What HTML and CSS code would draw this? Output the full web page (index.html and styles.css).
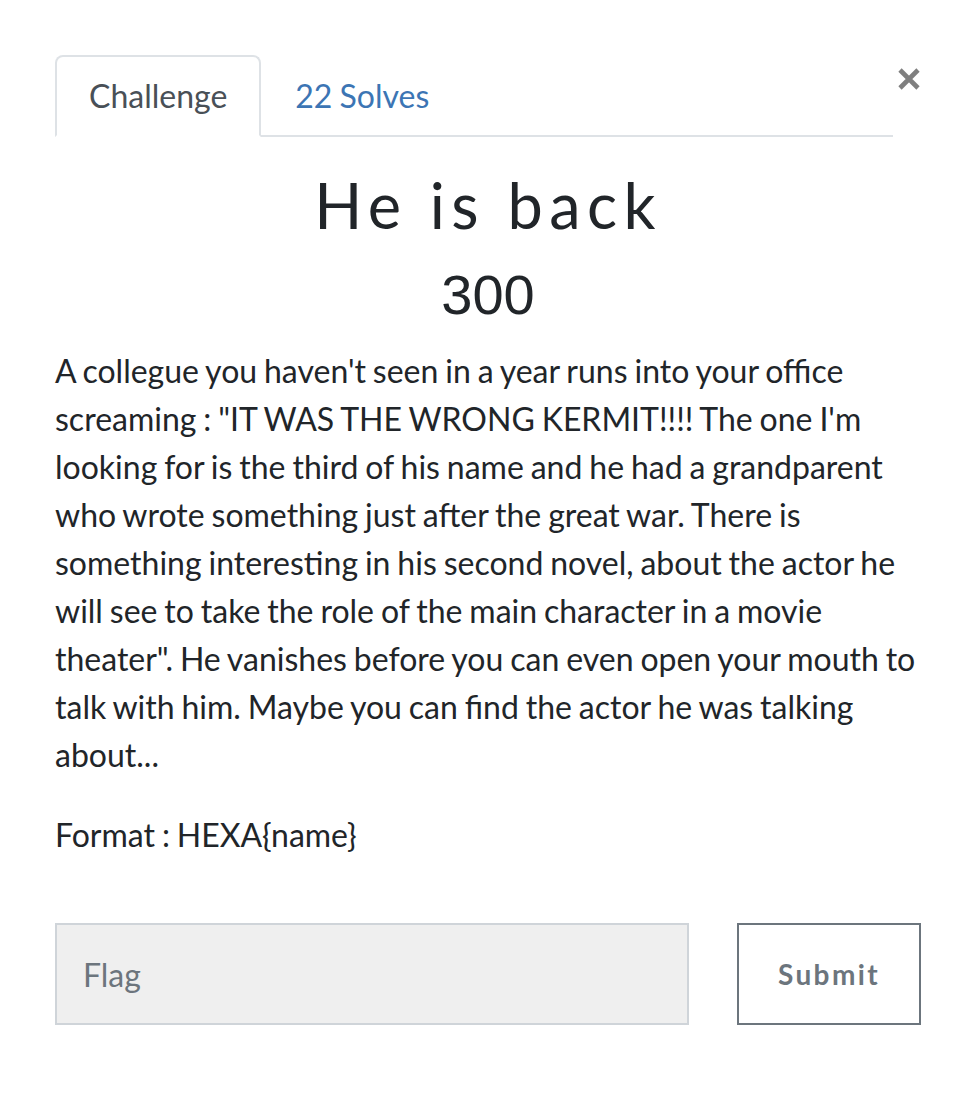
FILE: index.html
```html
<!DOCTYPE html>
<html lang="en">
<head>
<meta charset="utf-8">
<title>He is back</title>
<link rel="stylesheet" href="styles.css">
</head>
<body>
<div class="modal-body">
  <div class="top-row">
    <ul class="nav-tabs">
      <li class="tab active">Challenge</li>
      <li class="tab link">22 Solves</li>
    </ul>
    <button class="close" type="button" aria-label="Close">
      <svg width="24" height="24" viewBox="0 0 24 24"><path d="M3 3 L21 21 M21 3 L3 21" stroke="#7f7f7f" stroke-width="4.6" stroke-linecap="butt"/></svg>
    </button>
  </div>
  <h2 class="challenge-name">He is back</h2>
  <h3 class="challenge-value">300</h3>
  <p class="desc">A collegue you haven't seen in a year runs into your office screaming : "IT WAS THE WRONG KERMIT!!!! The one I'm looking for is the third of his name and he had a grandparent who wrote something just after the great war. There is something interesting in his second novel, about the actor he will see to take the role of the main character in a movie theater". He vanishes before you can even open your mouth to talk with him. Maybe you can find the actor he was talking about...</p>
  <p class="desc">Format : HEXA{name}</p>
  <form class="submit-row">
    <input class="flag-input" type="text" placeholder="Flag">
    <button class="submit-btn" type="button">Submit</button>
  </form>
</div>
</body>
</html>
```
FILE: styles.css
```css
html, body {
  margin: 0;
  padding: 0;
  background: #ffffff;
}
body {
  font-family: Lato, "Liberation Sans", sans-serif;
  color: #212529;
}
.modal-body {
  width: 866px;
  padding: 55px 0 0 55px;
}
.top-row {
  display: flex;
  align-items: flex-start;
}
.nav-tabs {
  flex: 1;
  display: flex;
  list-style: none;
  margin: 0;
  padding: 0;
  border-bottom: 2px solid #dee2e6;
  height: 80px;
}
.tab {
  font-size: 32px;
  line-height: 48px;
  padding: 15px 32px 15px;
  margin-bottom: -2px;
  border: 2px solid transparent;
  border-top-left-radius: 8px;
  border-top-right-radius: 8px;
  word-spacing: -1px;
}
.tab.active {
  color: #495057;
  background: #fff;
  border-color: #dee2e6 #dee2e6 #fff;
}
.tab.link {
  color: #3c75b4;
}
.close {
  width: 28px;
  height: 48px;
  padding: 0;
  margin: 0;
  border: 0;
  background: transparent;
  display: flex;
  justify-content: flex-end;
  align-items: flex-start;
  padding-top: 12px;
}
.challenge-name {
  margin: 0 0 16px;
  padding-top: 30px;
  text-align: center;
  font-size: 63px;
  font-weight: 400;
  line-height: 76px;
  letter-spacing: 6.4px;
  font-family: Lato, "Liberation Sans", sans-serif;
}
.challenge-value {
  margin: 0 0 16px;
  text-align: center;
  font-family: "Liberation Sans", Arial, sans-serif;
  font-weight: 400;
  font-size: 56px;
  line-height: 72px;
}
.desc {
  margin: 0 0 32px;
  font-size: 32px;
  line-height: 48px;
  word-spacing: -1.3px;
}
.submit-row {
  display: flex;
  gap: 48px;
  margin-top: 64px;
}
.flag-input {
  flex: 1;
  height: 102px;
  box-sizing: border-box;
  border: 2px solid #cfd4d9;
  background: #efefef;
  padding: 0 26px;
  font-family: Lato, sans-serif;
  font-size: 32px;
  color: #495057;
  border-radius: 0;
  outline: none;
}
.flag-input::placeholder {
  color: #6c757d;
}
.submit-btn {
  width: 184px;
  height: 102px;
  box-sizing: border-box;
  border: 2px solid #6c757d;
  background: #fff;
  color: #6c757d;
  font-family: Lato, sans-serif;
  font-weight: 700;
  font-size: 28px;
  letter-spacing: 2.4px;
  border-radius: 0;
}
```
